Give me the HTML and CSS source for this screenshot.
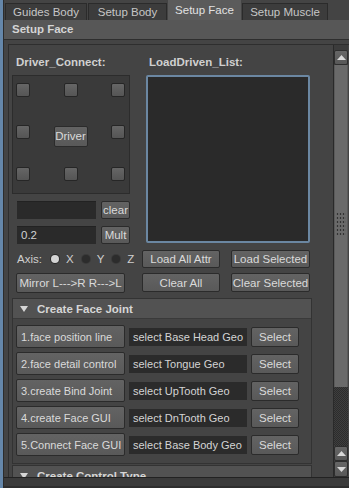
FILE: index.html
```html
<!DOCTYPE html>
<html lang="en">
<head>
  <meta charset="UTF-8">
  <meta name="viewport" content="width=device-width, initial-scale=1.0">
  <title>Setup Face</title>
  <link rel="stylesheet" href="styles.css">
</head>
<body>

  <div class="window">
    <div class="inner">

      <div class="tabs">
        <div class="tab">Guides Body</div>
        <div class="tab">Setup Body</div>
        <div class="tab active">Setup Face</div>
        <div class="tab">Setup Muscle</div>
      </div>

      <div class="panel-title">Setup Face</div>

      <div class="scroll">
        <div class="content">

          <div class="top">
            <div class="col-left">
              <div class="label">Driver_Connect:</div>
              <div class="pad">
                <span class="sq"></span><span class="sq"></span><span class="sq"></span>
                <span class="sq"></span><span class="btn driver">Driver</span><span class="sq"></span>
                <span class="sq"></span><span class="sq"></span><span class="sq"></span>
              </div>
              <div class="field-row">
                <div class="field"></div>
                <div class="btn small">clear</div>
              </div>
              <div class="field-row">
                <div class="field">0.2</div>
                <div class="btn small">Mult</div>
              </div>
              <div class="axis">
                <span class="axis-label">Axis:</span>
                <span class="opt"><span class="radio on"></span>X</span>
                <span class="opt"><span class="radio"></span>Y</span>
                <span class="opt"><span class="radio"></span>Z</span>
              </div>
              <div class="btn mirror">Mirror L---&gt;R R---&gt;L</div>
            </div>

            <div class="col-right">
              <div class="label">LoadDriven_List:</div>
              <div class="list"></div>
              <div class="list-btns">
                <div class="btn">Load All Attr</div>
                <div class="btn">Load Selected</div>
                <div class="btn">Clear All</div>
                <div class="btn">Clear Selected</div>
              </div>
            </div>
          </div>

          <div class="frame">
            <div class="frame-head"><span class="tri"></span>Create Face Joint</div>
            <div class="rows">
              <div class="row">
                <div class="btn step">1.face position line</div>
                <div class="geo">select Base Head Geo</div>
                <div class="btn sel">Select</div>
              </div>
              <div class="row">
                <div class="btn step">2.face detail control</div>
                <div class="geo">select Tongue Geo</div>
                <div class="btn sel">Select</div>
              </div>
              <div class="row">
                <div class="btn step">3.create Bind Joint</div>
                <div class="geo">select UpTooth Geo</div>
                <div class="btn sel">Select</div>
              </div>
              <div class="row">
                <div class="btn step">4.create Face GUI</div>
                <div class="geo">select DnTooth Geo</div>
                <div class="btn sel">Select</div>
              </div>
              <div class="row">
                <div class="btn step">5.Connect Face GUI</div>
                <div class="geo">select Base Body Geo</div>
                <div class="btn sel">Select</div>
              </div>
            </div>
          </div>

          <div class="frame next">
            <div class="frame-head"><span class="tri"></span>Create Control Type</div>
          </div>

        </div>

        <div class="scrollbar">
          <div class="sb-btn"><svg width="9" height="5" viewBox="0 0 9 5"><polygon points="0,5 4.5,0 9,5" fill="#d8d8d8"/></svg></div>
          <div class="sb-thumb"><div class="grip"></div></div>
          <div class="sb-track"></div>
          <div class="sb-btn"><svg width="9" height="5" viewBox="0 0 9 5"><polygon points="0,5 4.5,0 9,5" fill="#d8d8d8"/></svg></div>
          <div class="sb-btn last"><svg width="9" height="5" viewBox="0 0 9 5"><polygon points="0,0 4.5,5 9,0" fill="#d8d8d8"/></svg></div>
        </div>
      </div>

      <div class="footer"></div>
    </div>
  </div>

</body>
</html>
```

FILE: styles.css
```css
* {
  box-sizing: border-box;
}
body {
  margin: 0;
  background-color: #444;
  font-family: "Liberation Sans", Arial, sans-serif;
  font-size: 11px;
  color: #d2d2d2;
}
.window {
  width: 349px;
  height: 488px;
  overflow: hidden;
  border-left: 3px solid #6587aa;
}
.inner {
  height: 100%;
  border-left: 1px solid #2c2c2c;
  display: flex;
  flex-direction: column;
}

/* tabs */
.tabs {
  height: 20px;
  display: flex;
  align-items: flex-end;
  padding-left: 1px;
}
.tab {
  height: 17px;
  line-height: 16px;
  margin-right: 1px;
  text-align: center;
  white-space: nowrap;
  background-color: #3c3c3c;
  border: 1px solid #2b2b2b;
  border-bottom: none;
  color: #c6c6c6;
  font-size: 11.5px;
}
.tab:nth-child(1) { width: 82px; }
.tab:nth-child(2) { width: 79px; }
.tab:nth-child(3) { width: 73px; }
.tab:nth-child(4) { width: 86px; }
.tab.active {
  height: 20px;
  line-height: 19px;
  background-color: #5b5b5b;
  border-color: #5b5b5b;
  color: #e2e2e2;
}

.panel-title {
  height: 20px;
  line-height: 19px;
  padding-left: 8px;
  background-color: #575757;
  border-bottom: 1px solid #2e2e2e;
  font-weight: bold;
  font-size: 11.5px;
  color: #d4d4d4;
}

/* scroll area */
.scroll {
  margin-top: 4px;
  margin-left: 4px;
  height: 433px;
  border-top: 1px solid #2e2e2e;
  border-left: 1px solid #2e2e2e;
  display: flex;
}
.content {
  width: 324px;
  overflow: hidden;
  padding: 10px 0 0 3px;
}
.top {
  display: flex;
  gap: 12px;
}
.label {
  height: 14px;
  line-height: 14px;
  font-weight: bold;
  font-size: 11.5px;
  color: #d0d0d0;
}
.col-left {
  width: 118px;
}
.col-left .label {
  padding-left: 4px;
}
.col-right {
  width: 168px;
}
.col-right .label {
  padding-left: 7px;
}

.btn {
  background: linear-gradient(#636363, #595959);
  border: 1px solid #2b2b2b;
  border-radius: 2px;
  color: #dadada;
  display: flex;
  align-items: center;
  justify-content: center;
  white-space: nowrap;
}

.pad {
  margin-top: 6px;
  height: 119px;
  border: 1px solid #2c2c2c;
  background-color: #3a3a3a;
  display: grid;
  grid-template-columns: 14px 1fr 14px;
  grid-template-rows: repeat(3, 22px);
  row-gap: 20px;
  padding: 3px 4px 0 3px;
  align-items: center;
  justify-items: center;
}
.sq {
  width: 14px;
  height: 14px;
  background: linear-gradient(#666, #555);
  border: 1px solid #262626;
  border-radius: 2px;
}
.btn.driver {
  width: 34px;
  height: 21px;
  margin-top: 8px;
  font-size: 11.5px;
}

.field-row {
  display: flex;
  gap: 5px;
  margin-top: 7px;
  height: 18px;
  padding-left: 5px;
}
.field {
  width: 79px;
  background-color: #2a2a2a;
  border-top: 1px solid #222;
  padding-left: 4px;
  line-height: 17px;
  font-size: 11.5px;
}
.btn.small {
  width: 29px;
  font-size: 11.5px;
}

.axis {
  margin-top: 7px;
  width: 130px;
  height: 16px;
  display: flex;
  align-items: center;
  padding-left: 5px;
  color: #cfcfcf;
  font-size: 11.5px;
}
.axis-label {
  width: 34px;
  flex-shrink: 0;
}
.opt {
  display: flex;
  flex-shrink: 0;
  align-items: center;
  gap: 7px;
  margin-right: 8px;
}
.radio {
  width: 8px;
  height: 8px;
  border-radius: 50%;
  background-color: #2c2c2c;
  box-shadow: 0 0 0 1px #3a3a3a;
}
.radio.on {
  background-color: #d4d4d4;
  box-shadow: 0 0 0 1px #2a2a2a;
}
.btn.mirror {
  margin-top: 6px;
  margin-left: 4px;
  width: 109px;
  height: 20px;
  font-size: 11.5px;
}

.list {
  margin-top: 6px;
  margin-left: 4px;
  width: 164px;
  height: 168px;
  background-color: #2a2a2a;
  border: 2px solid #6b87a2;
  border-radius: 2px;
}
.list-btns {
  margin-top: 7px;
  display: grid;
  grid-template-columns: 78px 79px;
  grid-template-rows: 18px 19px;
  column-gap: 11px;
  row-gap: 5px;
  font-size: 11.5px;
}

/* frame layouts */
.frame {
  margin-top: 5px;
  width: 300px;
  border: 1px solid #333;
}
.frame-head {
  height: 20px;
  display: flex;
  align-items: center;
  padding-left: 7px;
  background-color: #525252;
  border-bottom: 1px solid #3a3a3a;
  font-weight: bold;
  font-size: 11.5px;
  color: #d6d6d6;
}
.tri {
  width: 0;
  height: 0;
  border-left: 4px solid transparent;
  border-right: 4px solid transparent;
  border-top: 6px solid #d6d6d6;
  margin-right: 9px;
}
.rows {
  display: flex;
  flex-direction: column;
  gap: 4px;
  padding: 6px 0 7px 3px;
}
.row {
  display: flex;
  align-items: center;
  gap: 4px;
  height: 23px;
}
.btn.step {
  width: 109px;
  height: 23px;
  justify-content: flex-start;
  padding-left: 4px;
  overflow: hidden;
}
.geo {
  width: 118px;
  height: 18px;
  line-height: 18px;
  background-color: #2b2b2b;
  padding-left: 4px;
  white-space: nowrap;
  overflow: hidden;
  color: #d4d4d4;
}
.btn.sel {
  width: 48px;
  height: 20px;
  font-size: 11.5px;
}
.frame.next {
  margin-top: 1px;
}

/* scrollbar */
.scrollbar {
  width: 15px;
  padding-top: 5px;
  display: flex;
  flex-direction: column;
  background-color: #3c3c3c;
  border-left: 1px solid #2a2a2a;
}
.sb-btn {
  height: 15px;
  background: linear-gradient(#666, #585858);
  border: 1px solid #2e2e2e;
  border-radius: 2px;
  display: flex;
  align-items: center;
  justify-content: center;
}
.sb-btn.last {
  height: 16px;
}
.sb-thumb {
  height: 322px;
  background-color: #6a6a6a;
  border-left: 1px solid #5a5a5a;
  border-right: 1px solid #5a5a5a;
  padding-top: 147px;
}
.grip {
  width: 10px;
  height: 23px;
  margin-left: 1px;
  background-image: radial-gradient(#333 0.8px, transparent 1.1px);
  background-size: 3px 4px;
}
.sb-track {
  flex: 1;
  background: repeating-conic-gradient(#2c2c2c 0 25%, #3e3e3e 0 50%) 0 0 / 2px 2px;
}

.footer {
  flex: 1;
  border-top: 1px solid #222;
  border-bottom: 2px solid #2e2e2e;
  background-color: #3b3b3b;
}
```
